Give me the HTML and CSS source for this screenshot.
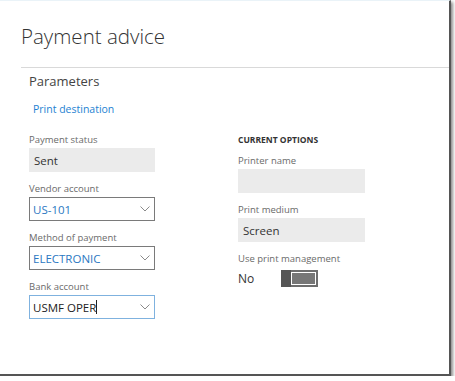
FILE: index.html
```html
<!DOCTYPE html>
<html lang="en">
<head>
  <meta charset="UTF-8" />
  <meta name="viewport" content="width=device-width, initial-scale=1.0"/>
  <title>Payment advice</title>
  <link rel="stylesheet" href="styles.css">
</head>
<body>
  <div class="window">
    <div class="header">
      <h1>Payment advice</h1>
    </div>

    <div class="section">
      <h2>Parameters</h2>
      <a class="link" href="#">Print destination</a>

      <div class="columns">
        <div class="col">
          <div class="field">
            <div class="label">Payment status</div>
            <div class="box readonly">Sent</div>
          </div>
          <div class="field">
            <div class="label">Vendor account</div>
            <div class="box select blue">US-101
              <svg class="chev" width="10" height="6" viewBox="0 0 10 6"><polyline points="0.5,0.5 5,5 9.5,0.5" fill="none" stroke="#8a8a8a" stroke-width="1"/></svg>
            </div>
          </div>
          <div class="field">
            <div class="label">Method of payment</div>
            <div class="box select blue">ELECTRONIC
              <svg class="chev" width="10" height="6" viewBox="0 0 10 6"><polyline points="0.5,0.5 5,5 9.5,0.5" fill="none" stroke="#8a8a8a" stroke-width="1"/></svg>
            </div>
          </div>
          <div class="field">
            <div class="label">Bank account</div>
            <div class="box select focus">USMF OPER<span class="caret"></span>
              <svg class="chev" width="10" height="6" viewBox="0 0 10 6"><polyline points="0.5,0.5 5,5 9.5,0.5" fill="none" stroke="#8a8a8a" stroke-width="1"/></svg>
            </div>
          </div>
        </div>

        <div class="col">
          <div class="group-title">CURRENT OPTIONS</div>
          <div class="field">
            <div class="label">Printer name</div>
            <div class="box readonly"></div>
          </div>
          <div class="field">
            <div class="label">Print medium</div>
            <div class="box readonly">Screen</div>
          </div>
          <div class="field">
            <div class="label">Use print management</div>
            <div class="toggle-row">
              <span class="toggle-text">No</span>
              <div class="toggle">
                <div class="thumb"></div>
                <div class="track"></div>
              </div>
            </div>
          </div>
        </div>
      </div>
    </div>
  </div>
</body>
</html>
```

FILE: styles.css
```css
* { margin: 0; padding: 0; box-sizing: border-box; }

body {
  font-family: "Open Sans", "Liberation Sans", sans-serif;
  background: #fff;
  color: #333;
}

.window {
  width: 451px;
  height: 376px;
  background: #fff;
  border-top: 1px solid #eaf3f8;
  border-right: 2px solid #555;
  border-bottom: 2px solid #555;
  box-shadow: 2px 2px 3px rgba(0, 0, 0, 0.45);
}

.header {
  margin-left: 21px;
  height: 67px;
  border-bottom: 1px solid #d9d9d9;
  padding-top: 21px;
}

h1 {
  font-size: 20.5px;
  font-weight: 300;
  color: #333;
  line-height: 28px;
}

.section {
  padding-left: 29px;
}

h2 {
  font-size: 13px;
  font-weight: 400;
  color: #444;
  line-height: 20px;
  margin-top: 3px;
}

.link {
  display: block;
  font-size: 10.5px;
  color: #1e82d2;
  text-decoration: none;
  margin: 11px 0 0 4px;
  line-height: 14px;
}

.columns {
  display: grid;
  grid-template-columns: 126px 127px;
  column-gap: 83px;
  margin-top: 17px;
}

.group-title {
  font-size: 8.5px;
  font-weight: 700;
  color: #333;
  line-height: 14px;
  margin-bottom: 7px;
}

.field {
  margin-bottom: 10px;
}

.label {
  font-size: 9.5px;
  color: #6a6a6a;
  line-height: 14px;
  margin-bottom: 1px;
}

.box {
  height: 24px;
  display: flex;
  align-items: center;
  padding-left: 5px;
  font-size: 11.5px;
  color: #333;
}

.readonly {
  background: #ebebeb;
}

.select {
  border: 1px solid #7a7a7a;
  position: relative;
  padding-left: 3px;
}

.select.blue {
  color: #2b78c2;
}

.select.focus {
  border-color: #7fb2df;
  color: #222;
}

.caret {
  display: inline-block;
  width: 1px;
  height: 14px;
  background: #222;
}

.chev {
  position: absolute;
  right: 4px;
  top: 8px;
}

.toggle-row {
  display: flex;
  align-items: center;
  height: 22px;
}

.toggle-text {
  font-size: 12px;
  color: #333;
  width: 43px;
}

.toggle {
  width: 37px;
  height: 17px;
  display: flex;
  background: #6e6e6e;
}

.thumb {
  width: 10px;
  background: #555;
}

.track {
  flex: 1;
  margin: 2px 2px 2px 0;
  border: 1px solid #fff;
  background: #777;
}
```
